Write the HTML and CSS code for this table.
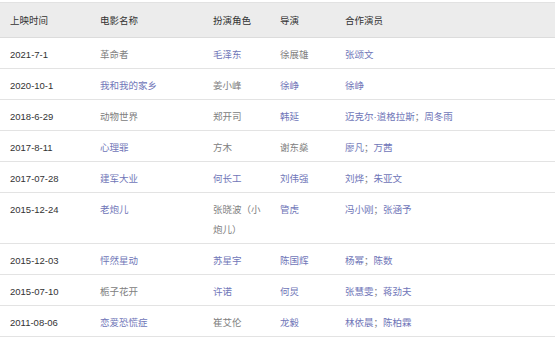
FILE: index.html
```html
<!DOCTYPE html>
<html lang="zh-CN">
<head>
    <meta charset="UTF-8">
    <title>电影列表</title>
    <link rel="stylesheet" href="styles.css">
</head>
<body>
    <table class="movie-table">
        <colgroup>
            <col class="col-date">
            <col class="col-name">
            <col class="col-role">
            <col class="col-director">
            <col class="col-cast">
        </colgroup>
        <thead>
            <tr>
                <th>上映时间</th>
                <th>电影名称</th>
                <th>扮演角色</th>
                <th>导演</th>
                <th>合作演员</th>
            </tr>
        </thead>
        <tbody>
            <tr>
                <td class="date">2021-7-1</td>
                <td>革命者</td>
                <td><a href="#">毛泽东</a></td>
                <td>徐展雄</td>
                <td><a href="#">张颂文</a></td>
            </tr>
            <tr>
                <td class="date">2020-10-1</td>
                <td><a href="#">我和我的家乡</a></td>
                <td>姜小峰</td>
                <td><a href="#">徐峥</a></td>
                <td><a href="#">徐峥</a></td>
            </tr>
            <tr>
                <td class="date">2018-6-29</td>
                <td>动物世界</td>
                <td>郑开司</td>
                <td><a href="#">韩延</a></td>
                <td><a href="#">迈克尔·道格拉斯</a>；<a href="#">周冬雨</a></td>
            </tr>
            <tr>
                <td class="date">2017-8-11</td>
                <td><a href="#">心理罪</a></td>
                <td>方木</td>
                <td>谢东燊</td>
                <td><a href="#">廖凡</a>；<a href="#">万茜</a></td>
            </tr>
            <tr>
                <td class="date">2017-07-28</td>
                <td><a href="#">建军大业</a></td>
                <td><a href="#">何长工</a></td>
                <td><a href="#">刘伟强</a></td>
                <td><a href="#">刘烨</a>；<a href="#">朱亚文</a></td>
            </tr>
            <tr>
                <td class="date">2015-12-24</td>
                <td><a href="#">老炮儿</a></td>
                <td class="wrap-any">张晓波（小炮儿）</td>
                <td><a href="#">管虎</a></td>
                <td><a href="#">冯小刚</a>；<a href="#">张涵予</a></td>
            </tr>
            <tr>
                <td class="date">2015-12-03</td>
                <td><a href="#">怦然星动</a></td>
                <td><a href="#">苏星宇</a></td>
                <td><a href="#">陈国辉</a></td>
                <td><a href="#">杨幂</a>；<a href="#">陈数</a></td>
            </tr>
            <tr>
                <td class="date">2015-07-10</td>
                <td>栀子花开</td>
                <td><a href="#">许诺</a></td>
                <td><a href="#">何炅</a></td>
                <td><a href="#">张慧雯</a>；<a href="#">蒋劲夫</a></td>
            </tr>
            <tr>
                <td class="date">2011-08-06</td>
                <td><a href="#">恋爱恐慌症</a></td>
                <td>崔艾伦</td>
                <td><a href="#">龙毅</a></td>
                <td><a href="#">林依晨</a>；<a href="#">陈柏霖</a></td>
            </tr>
        </tbody>
    </table>
</body>
</html>
```

FILE: styles.css
```css
body {
    margin: 0;
    padding-top: 2px;
    background: #fff;
    font-family: "Liberation Sans", "Noto Sans CJK SC", sans-serif;
    font-size: 9.5px;
    color: #808080;
}
.movie-table {
    width: 555px;
    border-collapse: collapse;
    table-layout: fixed;
}
.col-date { width: 90px; }
.col-name { width: 113px; }
.col-role { width: 67px; }
.col-director { width: 65px; }
.col-cast { width: 220px; }
th {
    background-color: #ececec; /* 表头灰色 */
    color: #333;
    font-weight: normal;
    text-align: left;
    line-height: 20px;
    padding: 8px 8px 6px 10px;
    border-top: 1px solid #e2e2e2;
    border-bottom: 1px solid #dcdcdc;
}
td {
    line-height: 20px;
    padding: 7px 8px 3px 10px;
    vertical-align: top;
    border-bottom: 1px solid #e3e3e3;
}
td.date {
    color: #333;
}
td.wrap-any {
    line-break: anywhere; /* 括号处也可换行 */
}
td a {
    color: #7076b8; /* 蓝紫色链接 */
    text-decoration: none;
}
```
